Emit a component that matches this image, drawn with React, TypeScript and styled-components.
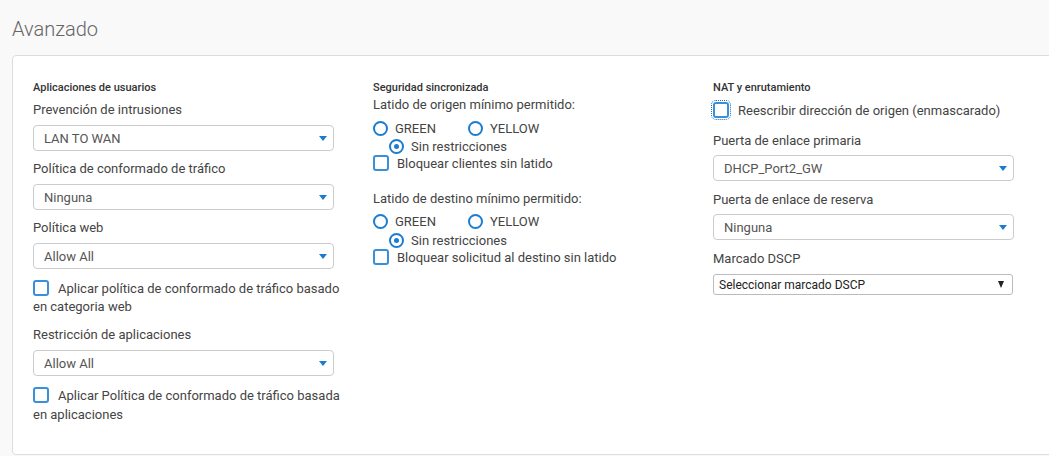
import React from "react";
import styled, { createGlobalStyle } from "styled-components";

const Global = createGlobalStyle`
  html, body { margin: 0; padding: 0; }
  body {
    background: #f9f9f9;
    font-family: Roboto, "Liberation Sans", Arial, sans-serif;
    overflow: hidden;
    width: 1049px;
    height: 456px;
  }
`;

const Page = styled.div`
  display: flex;
  flex-direction: column;
  padding: 16px 0 0 12px;
`;

const Title = styled.h1`
  margin: 0 0 13px 0;
  font-size: 20px;
  line-height: 26px;
  font-weight: 300;
  color: #666;
`;

const Panel = styled.section`
  box-sizing: border-box;
  height: 400px;
  margin-right: -20px;
  background: #fff;
  border: 1px solid #ddd;
  border-radius: 4px;
  padding: 25px 0 0 20px;
  display: grid;
  grid-template-columns: 340px 340px 1fr;
  align-items: start;
`;

const Column = styled.div`
  display: flex;
  flex-direction: column;
  align-items: flex-start;
`;

const SectionTitle = styled.div`
  font-size: 11px;
  line-height: 14px;
  font-weight: 500;
  color: #333;
`;

const FieldLabel = styled.div<{ $mt: number }>`
  margin-top: ${(p) => p.$mt}px;
  font-size: 13px;
  line-height: 16px;
  color: #444;
`;

const SelectBox = styled.div<{ $mt: number }>`
  box-sizing: border-box;
  margin-top: ${(p) => p.$mt}px;
  width: 301px;
  height: 26px;
  border: 1px solid #ccc;
  border-radius: 4px;
  background: #fff;
  display: flex;
  align-items: center;
  justify-content: space-between;
  padding: 0 6px 0 10px;
  font-size: 13px;
  color: #555;
`;

const BlueArrow = styled.span`
  width: 0;
  height: 0;
  border-left: 4px solid transparent;
  border-right: 4px solid transparent;
  border-top: 5px solid #1a7bd1;
  margin-top: 1px;
`;

const NativeSelect = styled.div<{ $mt: number }>`
  box-sizing: border-box;
  margin-top: ${(p) => p.$mt}px;
  width: 300px;
  height: 21px;
  border: 1px solid #bbb;
  border-radius: 3px;
  background: #fff;
  display: flex;
  align-items: center;
  justify-content: space-between;
  padding: 0 8px 0 5px;
  font-size: 12px;
  color: #222;
`;

const BlackArrow = styled.span`
  width: 0;
  height: 0;
  border-left: 3.5px solid transparent;
  border-right: 3.5px solid transparent;
  border-top: 7px solid #222;
`;

const CheckWrap = styled.div<{ $mt: number; $lh: number }>`
  margin-top: ${(p) => p.$mt}px;
  width: 320px;
  font-size: 13px;
  line-height: ${(p) => p.$lh}px;
  color: #444;
`;

const Box = styled.span<{ $focus?: boolean; $gap: number }>`
  box-sizing: border-box;
  display: inline-block;
  width: 16px;
  height: 16px;
  border: 2px solid #3a8fd9;
  border-radius: 3px;
  vertical-align: -3px;
  margin-right: ${(p) => p.$gap}px;
  outline: ${(p) => (p.$focus ? "1px dotted #1a6fc4" : "none")};
  outline-offset: 1px;
`;

const RadioRow = styled.div<{ $mt: number; $indent?: number }>`
  margin-top: ${(p) => p.$mt}px;
  padding-left: ${(p) => p.$indent ?? 0}px;
  height: 18px;
  display: flex;
  align-items: center;
  font-size: 13px;
  color: #444;
`;

const RadioItem = styled.label<{ $w?: number }>`
  display: flex;
  align-items: center;
  gap: 7px;
  width: ${(p) => (p.$w ? `${p.$w}px` : "auto")};
`;

const Radio = styled.span<{ $checked?: boolean }>`
  box-sizing: border-box;
  width: 15px;
  height: 15px;
  border-radius: 50%;
  border: 2.5px solid #1b7dd0;
  display: flex;
  align-items: center;
  justify-content: center;
  &::after {
    content: "";
    width: 5px;
    height: 5px;
    border-radius: 50%;
    background: ${(p) => (p.$checked ? "#1b7dd0" : "transparent")};
  }
`;

const Select = ({ value, mt }: { value: string; mt: number }) => (
  <SelectBox $mt={mt}>
    <span>{value}</span>
    <BlueArrow />
  </SelectBox>
);

const HeartbeatGroup = ({ label, mt }: { label: string; mt: number }) => (
  <>
    <FieldLabel $mt={mt}>{label}</FieldLabel>
  </>
);

export default function App() {
  return (
    <>
      <Global />
      <Page>
        <Title>Avanzado</Title>
        <Panel>
          <Column>
            <SectionTitle>Aplicaciones de usuarios</SectionTitle>
            <FieldLabel $mt={7}>Prevención de intrusiones</FieldLabel>
            <Select mt={7} value="LAN TO WAN" />
            <FieldLabel $mt={10}>Política de conformado de tráfico</FieldLabel>
            <Select mt={7} value="Ninguna" />
            <FieldLabel $mt={10}>Política web</FieldLabel>
            <Select mt={7} value="Allow All" />
            <CheckWrap $mt={11} $lh={18}>
              <Box $gap={9} />
              Aplicar política de conformado de tráfico basado en categoria web
            </CheckWrap>
            <FieldLabel $mt={11}>Restricción de aplicaciones</FieldLabel>
            <Select mt={7} value="Allow All" />
            <CheckWrap $mt={10} $lh={19}>
              <Box $gap={9} />
              Aplicar Política de conformado de tráfico basada en aplicaciones
            </CheckWrap>
          </Column>

          <Column>
            <SectionTitle>Seguridad sincronizada</SectionTitle>
            <HeartbeatGroup mt={2} label="Latido de origen mínimo permitido:" />
            <RadioRow $mt={6}>
              <RadioItem $w={95}><Radio />GREEN</RadioItem>
              <RadioItem><Radio />YELLOW</RadioItem>
            </RadioRow>
            <RadioRow $mt={0} $indent={16}>
              <RadioItem><Radio $checked />Sin restricciones</RadioItem>
            </RadioRow>
            <CheckWrap $mt={0} $lh={18}>
              <Box $gap={8} />
              Bloquear clientes sin latido
            </CheckWrap>
            <HeartbeatGroup mt={18} label="Latido de destino mínimo permitido:" />
            <RadioRow $mt={5}>
              <RadioItem $w={95}><Radio />GREEN</RadioItem>
              <RadioItem><Radio />YELLOW</RadioItem>
            </RadioRow>
            <RadioRow $mt={1} $indent={16}>
              <RadioItem><Radio $checked />Sin restricciones</RadioItem>
            </RadioRow>
            <CheckWrap $mt={0} $lh={18}>
              <Box $gap={8} />
              Bloquear solicitud al destino sin latido
            </CheckWrap>
          </Column>

          <Column>
            <SectionTitle>NAT y enrutamiento</SectionTitle>
            <CheckWrap $mt={7} $lh={18}>
              <Box $focus $gap={9} />
              Reescribir dirección de origen (enmascarado)
            </CheckWrap>
            <FieldLabel $mt={13}>Puerta de enlace primaria</FieldLabel>
            <Select mt={6} value="DHCP_Port2_GW" />
            <FieldLabel $mt={11}>Puerta de enlace de reserva</FieldLabel>
            <Select mt={6} value="Ninguna" />
            <FieldLabel $mt={11}>Marcado DSCP</FieldLabel>
            <NativeSelect $mt={7}>
              <span>Seleccionar marcado DSCP</span>
              <BlackArrow />
            </NativeSelect>
          </Column>
        </Panel>
      </Page>
    </>
  );
}
